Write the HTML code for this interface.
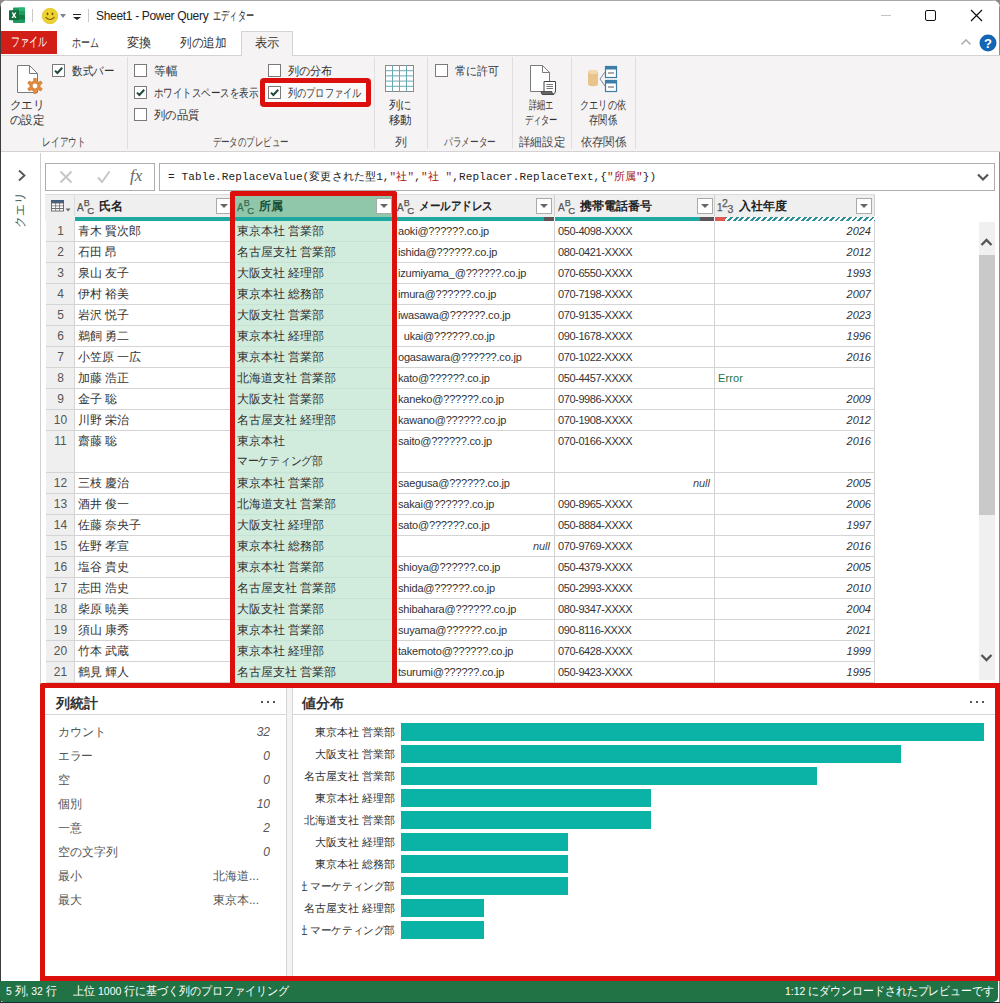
<!DOCTYPE html>
<html lang="ja"><head><meta charset="utf-8"><title>Sheet1 - Power Query</title>
<style>
*{box-sizing:border-box}
html,body{margin:0;padding:0}
body{width:1000px;height:1003px;overflow:hidden;background:#fff;font-family:"Liberation Sans",sans-serif;font-size:12px;color:#262626;position:relative}
.a{position:absolute}
#win{position:absolute;left:0;top:0;width:1000px;height:1003px;background:#fff;border-radius:8px 8px 0 0;overflow:hidden}
#bgc{position:absolute;left:0;top:0;width:1000px;height:12px;background:#8a8a8a}
#lb{position:absolute;left:0;top:4px;width:1px;height:999px;background:#3c3c3c}
/* title */
#title{position:absolute;left:96px;top:8px;font-size:12px;line-height:16px;color:#222;white-space:nowrap}
/* tabs */
#filetab{position:absolute;left:1px;top:31px;width:56px;height:23px;background:#d11e16;color:#fff;font-size:12.5px;text-align:center;line-height:23px}
.tab{position:absolute;top:31px;height:24px;line-height:24px;font-size:12.5px;color:#333;white-space:nowrap}
#acttab{position:absolute;left:241px;top:31px;width:52px;height:25px;background:#f5f3f4;border:1px solid #d4d2d3;border-bottom:none;text-align:center;line-height:23px;font-size:12.5px;color:#333}
#ribbon{position:absolute;left:1px;top:55px;width:999px;height:97px;background:#f5f3f4;border-top:1px solid #d4d2d3;border-bottom:1px solid #d4d2d3}
.sep{position:absolute;top:57px;width:1px;height:92px;background:#e0dedf}
.rl{position:absolute;font-size:12px;color:#333;white-space:nowrap;line-height:14px}
.gl{position:absolute;top:135px;font-size:12px;color:#444;white-space:nowrap;line-height:14px;text-align:center}
.cb{position:absolute;width:13px;height:13px;border:1px solid #7a7a7a;background:#fff}
.cb svg{position:absolute;left:0;top:0}
.big{position:absolute;text-align:center;font-size:12px;line-height:15px;color:#333;white-space:nowrap}
/* left pane */
#lpane{position:absolute;left:1px;top:153px;width:40px;height:827px;background:#fff;border-right:1px solid #cfcfcf}
/* formula */
.fbox{position:absolute;top:163px;height:28px;border:1px solid #adadad;background:#fff}
#ftext{position:absolute;left:168px;top:170px;font-family:"Liberation Mono",monospace;font-size:11px;color:#222;white-space:pre;line-height:14px}
/* table */
#thead{position:absolute;left:45px;top:195px;width:830px;height:22px;background:#efefef}
.th{position:absolute;top:196px;height:21px;font-weight:bold;font-size:12px;color:#222;line-height:21px;white-space:nowrap}
.dd{position:absolute;top:198px;width:16px;height:16px;border:1px solid #a9a9a9;background:#fff}
.dd:after{content:"";position:absolute;left:3px;top:5px;border:4px solid transparent;border-top:4px solid #666;border-bottom:none}
.r{position:absolute;left:0;width:1000px}
.c{position:absolute;top:0;height:100%;border-right:1px solid #d4d4d4;border-bottom:1px solid #d4d4d4;padding:0 3px;line-height:20px;font-size:12px;color:#333;white-space:nowrap;overflow:hidden;background:#fff}
.rn{background:#efefef;text-align:center;padding:0 0 0 1px;color:#555;border-left:none}
.sel{padding-left:4px;background:#d1ecdd;border-right-color:#bfe0cf;border-bottom-color:#c4e3d2}
.num{text-align:right;font-style:italic;color:#333;font-size:11px;padding-right:3px}
.nul{text-align:right;font-style:italic;color:#444;font-size:11px;padding-right:4px}
.err{color:#217346;font-size:11px;letter-spacing:0.1px}
.em{font-size:11px;color:#333;letter-spacing:-0.2px}
.ph{font-size:11px;color:#333;letter-spacing:-0.41px}
/* red */
.red{position:absolute;border:5px solid #db0f0b;border-radius:3px}
/* profile */
.ph1{position:absolute;top:694px;font-size:14px;font-weight:bold;color:#333;line-height:18px;white-space:nowrap}
.st{position:absolute;left:58px;font-size:12px;color:#555;line-height:16px;white-space:nowrap}
.sv{position:absolute;right:730px;font-size:12px;color:#555;font-style:italic;line-height:16px;white-space:nowrap;text-align:right}
.bl{position:absolute;right:605px;font-size:10.8px;color:#333;line-height:16px;white-space:nowrap;text-align:right}
.bar{position:absolute;left:401px;height:18px;background:#0ab3a5}
#status{position:absolute;left:0;top:980.5px;width:998px;height:21px;background:#217346;color:#fff;font-size:11.5px;line-height:21.5px;border-radius:0 0 5px 4px;white-space:nowrap}
#title2{position:absolute;left:213px;top:8px;font-size:13px;line-height:16px;color:#222;white-space:nowrap}
#tb{position:absolute;left:0;top:0;width:1000px;height:1px;background:#a8a8a8}
#rb{position:absolute;left:999px;top:6px;width:1px;height:997px;background:#8c8c8c}

</style></head><body>
<div id="bgc"></div>
<div id="win">
<div id="lb"></div><div id="tb"></div><div id="rb"></div>
<!-- title bar -->
<svg class="a" style="left:9px;top:7px" width="17" height="17" viewBox="0 0 17 17">
 <rect x="4" y="0.5" width="12" height="15.5" rx="1" fill="#1f9a60"/>
 <rect x="4" y="4.4" width="12" height="3.9" fill="#107c41"/>
 <rect x="4" y="8.3" width="12" height="3.9" fill="#185c37"/>
 <rect x="10" y="0.5" width="6" height="3.9" fill="#2bb673"/>
 <rect x="10" y="4.4" width="6" height="3.9" fill="#1f9a60"/>
 <rect x="10" y="8.3" width="6" height="3.9" fill="#107c41"/>
 <rect x="0" y="3.2" width="10" height="10" rx="0.8" fill="#0f6e3a"/>
 <path d="M2.6 5.4 L4.2 5.4 L5 7.1 L5.8 5.4 L7.4 5.4 L5.9 8.2 L7.5 11 L5.9 11 L5 9.3 L4.1 11 L2.5 11 L4.1 8.2 Z" fill="#fff"/>
</svg>
<div class="a" style="left:32px;top:9px;width:1px;height:13px;background:#c8c8c8"></div>
<svg class="a" style="left:41px;top:7px" width="18" height="18" viewBox="0 0 18 18">
 <circle cx="9" cy="9" r="7.7" fill="#f0d22e" stroke="#dcc02a" stroke-width="0.8"/>
 <ellipse cx="6.5" cy="6.9" rx="0.9" ry="1.4" fill="#6b5712"/>
 <ellipse cx="11.5" cy="6.9" rx="0.9" ry="1.4" fill="#6b5712"/>
 <path d="M4.8 10.3 Q9 14.6 13.2 10.3" fill="none" stroke="#6b5712" stroke-width="1.1" stroke-linecap="round"/>
</svg>
<div class="a" style="left:60px;top:14px;border:3.5px solid transparent;border-top:4px solid #7a8793;border-bottom:none"></div>
<div class="a" style="left:73px;top:13.5px;width:8px;height:1px;background:#222"></div>
<div class="a" style="left:73px;top:16.5px;border:4px solid transparent;border-top:3.5px solid #222;border-bottom:none"></div>
<div class="a" style="left:88px;top:9px;width:1px;height:13px;background:#c8c8c8"></div>
<div id="title" style="letter-spacing:-0.32px">Sheet1 - Power Query</div><div id="title2" style="transform:scaleX(0.6308);transform-origin:0 0">エディター</div>
<!-- window controls -->
<div class="a" style="left:881px;top:15px;width:10px;height:1px;background:#c4c4c4"></div>
<div class="a" style="left:925px;top:10px;width:11px;height:11px;border:1.3px solid #111;border-radius:2px"></div>
<svg class="a" style="left:970px;top:9px" width="13" height="13" viewBox="0 0 13 13"><path d="M1 1 L12 12 M12 1 L1 12" stroke="#111" stroke-width="1.2" fill="none"/></svg>
<!-- tabs -->
<div id="filetab"><span style="display:inline-block;transform:scaleX(0.6923);transform-origin:50% 0">ファイル</span></div>
<div class="tab" style="left:72px;transform:scaleX(0.6923);transform-origin:0 0">ホーム</div>
<div class="tab" style="left:127px;transform:scaleX(0.9423);transform-origin:0 0">変換</div>
<div class="tab" style="left:180px;transform:scaleX(0.8942);transform-origin:0 0">列の追加</div>
<div id="ribbon"></div>
<div id="acttab"><span style="display:inline-block;transform:scaleX(0.9423);transform-origin:50% 0">表示</span></div>
<svg class="a" style="left:960px;top:38px" width="12" height="8" viewBox="0 0 12 8"><path d="M1.5 6.5 L6 2 L10.5 6.5" stroke="#b0b0b0" stroke-width="1.6" fill="none"/></svg>
<svg class="a" style="left:979px;top:34px" width="18" height="18" viewBox="0 0 18 18"><circle cx="9" cy="9" r="8.5" fill="#1565b5"/><text x="9" y="13.6" font-family="Liberation Sans, sans-serif" font-weight="bold" font-size="13" fill="#fff" text-anchor="middle">?</text></svg>
<!-- ribbon contents -->
<!-- layout group -->
<svg class="a" style="left:16px;top:64px" width="30" height="32" viewBox="0 0 30 32">
 <path d="M1.5 1.5 H13.5 L21.5 9.5 V28.5 H1.5 Z" fill="#fff" stroke="#7a7a7a" stroke-width="1"/>
 <path d="M13.5 1.5 V9.5 H21.5" fill="none" stroke="#7a7a7a" stroke-width="1"/>
 <g transform="translate(19,22)" fill="#dd8a41">
  <circle r="5.6"/>
  <g id="teeth"><rect x="-1.8" y="-8" width="3.6" height="16" rx="0.8"/><rect x="-1.8" y="-8" width="3.6" height="16" rx="0.8" transform="rotate(60)"/><rect x="-1.8" y="-8" width="3.6" height="16" rx="0.8" transform="rotate(120)"/></g>
  <circle r="2.4" fill="#fff"/>
 </g>
</svg>
<div class="big" style="left:4px;top:98px;width:46px;transform:scaleX(0.9722);transform-origin:50% 0">クエリ<br>の設定</div>
<div class="cb" style="left:52px;top:64px"><svg width="11" height="11" viewBox="0 0 11 11"><path d="M2 5.6 L4.4 8 L9.2 2.8" stroke="#1f4a3f" stroke-width="2" fill="none"/></svg></div>
<div class="rl" style="left:72px;top:64px;transform:scaleX(0.8750);transform-origin:0 0">数式バー</div>
<div class="gl" style="left:1px;width:126px;transform:scaleX(0.7167);transform-origin:50% 0">レイアウト</div>
<div class="sep" style="left:127px"></div>
<!-- data preview group -->
<div class="cb" style="left:134px;top:64px"></div>
<div class="rl" style="left:154px;top:64px;transform:scaleX(0.9750);transform-origin:0 0">等幅</div>
<div class="cb" style="left:134px;top:86px"><svg width="11" height="11" viewBox="0 0 11 11"><path d="M2 5.6 L4.4 8 L9.2 2.8" stroke="#1f4a3f" stroke-width="2" fill="none"/></svg></div>
<div class="rl" style="left:154px;top:86px;transform:scaleX(0.7879);transform-origin:0 0">ホワイトスペースを表示</div>
<div class="cb" style="left:134px;top:108px"></div>
<div class="rl" style="left:154px;top:108px;transform:scaleX(0.9479);transform-origin:0 0">列の品質</div>
<div class="a" style="left:263px;top:81px;width:105px;height:23px;background:#fbfafa"></div>
<div class="cb" style="left:268px;top:64px"></div>
<div class="rl" style="left:288px;top:64px;transform:scaleX(0.9271);transform-origin:0 0">列の分布</div>
<div class="cb" style="left:268px;top:86px"><svg width="11" height="11" viewBox="0 0 11 11"><path d="M2 5.6 L4.4 8 L9.2 2.8" stroke="#1f4a3f" stroke-width="2" fill="none"/></svg></div>
<div class="rl" style="left:288px;top:86px;transform:scaleX(0.7625);transform-origin:0 0">列のプロファイル</div>
<div class="red" style="left:260px;top:78px;width:111px;height:29px;border-radius:4px"></div>
<div class="gl" style="left:127px;width:247px;transform:scaleX(0.7037);transform-origin:50% 0">データのプレビュー</div>
<div class="sep" style="left:374px"></div>
<!-- column group -->
<svg class="a" style="left:385px;top:65px" width="30" height="28" viewBox="0 0 30 28">
 <rect x="0.5" y="0.5" width="28" height="26" fill="#fff" stroke="#8a8a8a"/>
 <path d="M0.5 5.7 H28.5 M0.5 10.9 H28.5 M0.5 16.1 H28.5 M0.5 21.3 H28.5" stroke="#6aa7b4" stroke-width="1"/>
 <path d="M7.5 0.5 V26.5 M14.5 0.5 V26.5 M21.5 0.5 V26.5" stroke="#6aa7b4" stroke-width="1"/>
</svg>
<div class="big" style="left:376px;top:98px;width:48px;transform:scaleX(0.9583);transform-origin:50% 0">列に<br>移動</div>
<div class="gl" style="left:375px;width:52px">列</div>
<div class="sep" style="left:427px"></div>
<!-- parameter group -->
<div class="cb" style="left:435px;top:64px"></div>
<div class="rl" style="left:455px;top:64px;transform:scaleX(0.9167);transform-origin:0 0">常に許可</div>
<div class="gl" style="left:428px;width:84px;transform:scaleX(0.7222);transform-origin:50% 0">パラメーター</div>
<div class="sep" style="left:512px"></div>
<!-- advanced editor -->
<svg class="a" style="left:529px;top:64px" width="30" height="32" viewBox="0 0 30 32">
 <path d="M1.5 1.5 H13.5 L20.5 8.5 V27.5 H1.5 Z" fill="#fff" stroke="#7a7a7a" stroke-width="1"/>
 <path d="M13.5 1.5 V8.5 H20.5" fill="none" stroke="#7a7a7a" stroke-width="1"/>
 <path d="M15 17.5 H26.5 V27 Q26.5 30.5 23 30.5 H13.5 Q15 29 15 27 Z" fill="#fff" stroke="#444" stroke-width="1"/>
 <path d="M12 27.5 H23 Q23 30.5 25 30.5 H14 Q12 30.5 12 27.5 Z" fill="#666" stroke="#444" stroke-width="0.8"/>
 <path d="M17.5 20.5 H24 M17.5 22.5 H24 M17.5 24.5 H24" stroke="#666" stroke-width="0.9"/>
</svg>
<div class="big" style="left:514px;top:98px;width:54px;transform:scaleX(0.6875);transform-origin:50% 0">詳細エ<br>ディター</div>
<div class="gl" style="left:513px;width:58px;transform:scaleX(0.9688);transform-origin:50% 0">詳細設定</div>
<div class="sep" style="left:571px"></div>
<!-- dependencies -->
<svg class="a" style="left:586px;top:65px" width="32" height="30" viewBox="0 0 32 30">
 <path d="M2 7 V19 A5 2.2 0 0 0 12 19 V7 Z" fill="#e8c48a"/>
 <ellipse cx="7" cy="7" rx="5" ry="2.2" fill="#f1d9ae"/>
 <path d="M19 7 L14 14 L19 21" fill="none" stroke="#7a8a96" stroke-width="1"/>
 <rect x="19.5" y="1.5" width="11" height="11" fill="#fff" stroke="#3c7ea6" stroke-width="1.2"/>
 <rect x="19.5" y="1.5" width="11" height="3" fill="#3c7ea6"/>
 <path d="M22 8 H28" stroke="#555" stroke-width="1"/>
 <rect x="19.5" y="15.5" width="11" height="11" fill="#fff" stroke="#3c7ea6" stroke-width="1.2"/>
 <rect x="19.5" y="15.5" width="11" height="3" fill="#3c7ea6"/>
 <path d="M22 22 H28" stroke="#555" stroke-width="1"/>
</svg>
<div class="big" style="left:573px;top:98px;width:60px;transform:scaleX(0.7667);transform-origin:50% 0">クエリの依<br>存関係</div>
<div class="gl" style="left:572px;width:63px;transform:scaleX(0.9583);transform-origin:50% 0">依存関係</div>
<div class="sep" style="left:635px"></div>
<!-- left pane -->
<div id="lpane"></div>
<svg class="a" style="left:17px;top:169px" width="10" height="13" viewBox="0 0 10 13"><path d="M2 1.5 L7.5 6.5 L2 11.5" stroke="#555" stroke-width="1.8" fill="none"/></svg>
<div class="a" style="left:2px;top:202px;width:36px;height:16px;font-size:12px;color:#3f6157;line-height:16px;text-align:center;white-space:nowrap;transform:rotate(-90deg)">クエリ</div>
<!-- formula bar -->
<div class="fbox" style="left:45px;width:110px"></div>
<svg class="a" style="left:58px;top:169px" width="16" height="16" viewBox="0 0 16 16"><path d="M2.5 2.5 L13.5 13.5 M13.5 2.5 L2.5 13.5" stroke="#c6c6c6" stroke-width="2" fill="none"/></svg>
<svg class="a" style="left:96px;top:169px" width="16" height="16" viewBox="0 0 16 16"><path d="M2 8.5 L6 13 L13.5 2.5" stroke="#c6c6c6" stroke-width="2" fill="none"/></svg>
<div class="a" style="left:130px;top:166px;font-family:'Liberation Serif',serif;font-style:italic;font-size:17px;color:#666;line-height:20px">fx</div>
<div class="fbox" style="left:159px;width:836px"></div>
<div id="ftext" style="letter-spacing:0.13px">= Table.ReplaceValue(変更された型1,<span style="color:#a31515">"社"</span>,<span style="color:#a31515">"社 "</span>,Replacer.ReplaceText,{<span style="color:#a31515">"所属"</span>})</div>
<svg class="a" style="left:976px;top:172px" width="14" height="10" viewBox="0 0 14 10"><path d="M2 2.5 L7 7.5 L12 2.5" stroke="#555" stroke-width="2.2" fill="none"/></svg>
<!-- table header -->
<div id="thead"></div>
<div class="a" style="left:233px;top:195px;width:162px;height:22px;background:#90c7aa"></div>
<svg class="a" style="left:51px;top:200px" width="22" height="13" viewBox="0 0 22 13">
 <rect x="0" y="0" width="13" height="11.5" fill="#6e6e6e"/>
 <rect x="0" y="0" width="13" height="2.6" fill="#445f7c"/>
 <path d="M1 3.6 H4.3 V5.4 H1 Z M5.1 3.6 H8 V5.4 H5.1 Z M8.8 3.6 H12 V5.4 H8.8 Z M1 6.3 H4.3 V8 H1 Z M5.1 6.3 H8 V8 H5.1 Z M8.8 6.3 H12 V8 H8.8 Z M1 8.9 H4.3 V10.6 H1 Z M5.1 8.9 H8 V10.6 H5.1 Z M8.8 8.9 H12 V10.6 H8.8 Z" fill="#fff"/>
 <path d="M14.6 8.6 H19.6 L17.1 11.4 Z" fill="#666"/>
</svg>
<!-- header cols -->

<svg class="a" style="left:77px;top:197px;color:#555" width="18" height="18"><g font-family="Liberation Sans, sans-serif" fill="currentColor" stroke="currentColor" stroke-width="0.25"><text x="0" y="14" font-size="10">A</text><text x="6.8" y="8.6" font-size="9">B</text><text x="10.2" y="17" font-size="9.5">C</text></g></svg>
<div class="th" style="left:99px">氏名</div>
<div class="dd" style="left:216px"></div>
<svg class="a" style="left:237px;top:197px;color:#3a6b52" width="18" height="18"><g font-family="Liberation Sans, sans-serif" fill="currentColor" stroke="currentColor" stroke-width="0.25"><text x="0" y="14" font-size="10">A</text><text x="6.8" y="8.6" font-size="9">B</text><text x="10.2" y="17" font-size="9.5">C</text></g></svg>
<div class="th" style="left:259px;color:#1d4f36">所属</div>
<div class="dd" style="left:376px"></div>
<svg class="a" style="left:397px;top:197px;color:#555" width="18" height="18"><g font-family="Liberation Sans, sans-serif" fill="currentColor" stroke="currentColor" stroke-width="0.25"><text x="0" y="14" font-size="10">A</text><text x="6.8" y="8.6" font-size="9">B</text><text x="10.2" y="17" font-size="9.5">C</text></g></svg>
<div class="th" style="left:419px;transform:scaleX(0.8762);transform-origin:0 0">メールアドレス</div>
<div class="dd" style="left:536px"></div>
<svg class="a" style="left:558px;top:197px;color:#555" width="18" height="18"><g font-family="Liberation Sans, sans-serif" fill="currentColor" stroke="currentColor" stroke-width="0.25"><text x="0" y="14" font-size="10">A</text><text x="6.8" y="8.6" font-size="9">B</text><text x="10.2" y="17" font-size="9.5">C</text></g></svg>
<div class="th" style="left:580px">携帯電話番号</div>
<div class="dd" style="left:697px"></div>
<svg class="a" style="left:717px;top:197px" width="18" height="18"><g font-family="Liberation Sans, sans-serif" fill="#5a5a5a" stroke="#5a5a5a" stroke-width="0.25"><text x="0" y="14" font-size="10">1</text><text x="5" y="10" font-size="10.5">2</text><text x="10.6" y="16" font-size="10.5">3</text></g></svg>
<div class="th" style="left:739px">入社年度</div>
<div class="dd" style="left:856px"></div>
<!-- header separators -->
<div class="a" style="left:74px;top:195px;width:1px;height:21px;background:#dcdcdc"></div>
<div class="a" style="left:394px;top:195px;width:1px;height:21px;background:#d0d0d0"></div>
<div class="a" style="left:554px;top:195px;width:1px;height:21px;background:#d0d0d0"></div>
<div class="a" style="left:714px;top:195px;width:1px;height:21px;background:#d0d0d0"></div>
<div class="a" style="left:874px;top:195px;width:1px;height:21px;background:#d0d0d0"></div>
<div class="a" style="left:45px;top:194px;width:830px;height:1px;background:#dcdcdc"></div>
<!-- quality bars -->
<div class="a" style="left:45px;top:217px;width:30px;height:4px;background:#efefef"></div>
<div class="a" style="left:75px;top:217px;width:158px;height:4px;background:#1fa8a1"></div>
<div class="a" style="left:233px;top:217px;width:162px;height:4px;background:#1fa8a1"></div>
<div class="a" style="left:395px;top:217px;width:149px;height:4px;background:#1fa8a1"></div>
<div class="a" style="left:544px;top:217px;width:10px;height:4px;background:#5c5557"></div>
<div class="a" style="left:555px;top:217px;width:145px;height:4px;background:#1fa8a1"></div>
<div class="a" style="left:700px;top:217px;width:14px;height:4px;background:#5c5557"></div>
<div class="a" style="left:715px;top:217px;width:10px;height:4px;background:#e0584f"></div>
<div class="a" style="left:725px;top:217px;width:150px;height:4px;background:repeating-linear-gradient(135deg,#2f8f98 0,#2f8f98 2px,#fff 2px,#fff 4px)"></div>

<div id="rows">
<div class="r" style="top:221px;height:21px"><div class="c rn" style="left:46px;width:29px">1</div><div class="c" style="left:75px;width:158px">青木 賢次郎</div><div class="c sel" style="left:233px;width:162px">東京本社 営業部</div><div class="c em" style="left:395px;width:160px">aoki@??????.co.jp</div><div class="c ph" style="left:555px;width:160px">050-4098-XXXX</div><div class="c num" style="left:715px;width:160px">2024</div></div>
<div class="r" style="top:242px;height:21px"><div class="c rn" style="left:46px;width:29px">2</div><div class="c" style="left:75px;width:158px">石田 昂</div><div class="c sel" style="left:233px;width:162px">名古屋支社 営業部</div><div class="c em" style="left:395px;width:160px">ishida@??????.co.jp</div><div class="c ph" style="left:555px;width:160px">080-0421-XXXX</div><div class="c num" style="left:715px;width:160px">2012</div></div>
<div class="r" style="top:263px;height:21px"><div class="c rn" style="left:46px;width:29px">3</div><div class="c" style="left:75px;width:158px">泉山 友子</div><div class="c sel" style="left:233px;width:162px">大阪支社 経理部</div><div class="c em" style="left:395px;width:160px">izumiyama_@??????.co.jp</div><div class="c ph" style="left:555px;width:160px">070-6550-XXXX</div><div class="c num" style="left:715px;width:160px">1993</div></div>
<div class="r" style="top:284px;height:21px"><div class="c rn" style="left:46px;width:29px">4</div><div class="c" style="left:75px;width:158px">伊村 裕美</div><div class="c sel" style="left:233px;width:162px">東京本社 総務部</div><div class="c em" style="left:395px;width:160px">imura@??????.co.jp</div><div class="c ph" style="left:555px;width:160px">070-7198-XXXX</div><div class="c num" style="left:715px;width:160px">2007</div></div>
<div class="r" style="top:305px;height:21px"><div class="c rn" style="left:46px;width:29px">5</div><div class="c" style="left:75px;width:158px">岩沢 悦子</div><div class="c sel" style="left:233px;width:162px">大阪支社 営業部</div><div class="c em" style="left:395px;width:160px">iwasawa@??????.co.jp</div><div class="c ph" style="left:555px;width:160px">070-9135-XXXX</div><div class="c num" style="left:715px;width:160px">2023</div></div>
<div class="r" style="top:326px;height:21px"><div class="c rn" style="left:46px;width:29px">6</div><div class="c" style="left:75px;width:158px">鵜飼 勇二</div><div class="c sel" style="left:233px;width:162px">東京本社 経理部</div><div class="c em" style="left:395px;width:160px">&nbsp;&nbsp;ukai@??????.co.jp</div><div class="c ph" style="left:555px;width:160px">090-1678-XXXX</div><div class="c num" style="left:715px;width:160px">1996</div></div>
<div class="r" style="top:347px;height:21px"><div class="c rn" style="left:46px;width:29px">7</div><div class="c" style="left:75px;width:158px">小笠原 一広</div><div class="c sel" style="left:233px;width:162px">東京本社 営業部</div><div class="c em" style="left:395px;width:160px">ogasawara@??????.co.jp</div><div class="c ph" style="left:555px;width:160px">070-1022-XXXX</div><div class="c num" style="left:715px;width:160px">2016</div></div>
<div class="r" style="top:368px;height:21px"><div class="c rn" style="left:46px;width:29px">8</div><div class="c" style="left:75px;width:158px">加藤 浩正</div><div class="c sel" style="left:233px;width:162px">北海道支社 営業部</div><div class="c em" style="left:395px;width:160px">kato@??????.co.jp</div><div class="c ph" style="left:555px;width:160px">050-4457-XXXX</div><div class="c err" style="left:715px;width:160px">Error</div></div>
<div class="r" style="top:389px;height:21px"><div class="c rn" style="left:46px;width:29px">9</div><div class="c" style="left:75px;width:158px">金子 聡</div><div class="c sel" style="left:233px;width:162px">大阪支社 営業部</div><div class="c em" style="left:395px;width:160px">kaneko@??????.co.jp</div><div class="c ph" style="left:555px;width:160px">070-9986-XXXX</div><div class="c num" style="left:715px;width:160px">2009</div></div>
<div class="r" style="top:410px;height:21px"><div class="c rn" style="left:46px;width:29px">10</div><div class="c" style="left:75px;width:158px">川野 栄治</div><div class="c sel" style="left:233px;width:162px">名古屋支社 経理部</div><div class="c em" style="left:395px;width:160px">kawano@??????.co.jp</div><div class="c ph" style="left:555px;width:160px">070-1908-XXXX</div><div class="c num" style="left:715px;width:160px">2012</div></div>
<div class="r" style="top:431px;height:42px"><div class="c rn" style="left:46px;width:29px">11</div><div class="c" style="left:75px;width:158px">齋藤 聡</div><div class="c sel" style="left:233px;width:162px">東京本社<br><span style="display:inline-block;transform:scaleX(0.8958);transform-origin:0 0">マーケティング部</span></div><div class="c em" style="left:395px;width:160px">saito@??????.co.jp</div><div class="c ph" style="left:555px;width:160px">070-0166-XXXX</div><div class="c num" style="left:715px;width:160px">2016</div></div>
<div class="r" style="top:473px;height:21px"><div class="c rn" style="left:46px;width:29px">12</div><div class="c" style="left:75px;width:158px">三枝 慶治</div><div class="c sel" style="left:233px;width:162px">東京本社 営業部</div><div class="c em" style="left:395px;width:160px">saegusa@??????.co.jp</div><div class="c nul" style="left:555px;width:160px">null</div><div class="c num" style="left:715px;width:160px">2005</div></div>
<div class="r" style="top:494px;height:21px"><div class="c rn" style="left:46px;width:29px">13</div><div class="c" style="left:75px;width:158px">酒井 俊一</div><div class="c sel" style="left:233px;width:162px">北海道支社 営業部</div><div class="c em" style="left:395px;width:160px">sakai@??????.co.jp</div><div class="c ph" style="left:555px;width:160px">090-8965-XXXX</div><div class="c num" style="left:715px;width:160px">2006</div></div>
<div class="r" style="top:515px;height:21px"><div class="c rn" style="left:46px;width:29px">14</div><div class="c" style="left:75px;width:158px">佐藤 奈央子</div><div class="c sel" style="left:233px;width:162px">大阪支社 経理部</div><div class="c em" style="left:395px;width:160px">sato@??????.co.jp</div><div class="c ph" style="left:555px;width:160px">050-8884-XXXX</div><div class="c num" style="left:715px;width:160px">1997</div></div>
<div class="r" style="top:536px;height:21px"><div class="c rn" style="left:46px;width:29px">15</div><div class="c" style="left:75px;width:158px">佐野 孝宣</div><div class="c sel" style="left:233px;width:162px">東京本社 総務部</div><div class="c nul" style="left:395px;width:160px">null</div><div class="c ph" style="left:555px;width:160px">070-9769-XXXX</div><div class="c num" style="left:715px;width:160px">2016</div></div>
<div class="r" style="top:557px;height:21px"><div class="c rn" style="left:46px;width:29px">16</div><div class="c" style="left:75px;width:158px">塩谷 貴史</div><div class="c sel" style="left:233px;width:162px">東京本社 営業部</div><div class="c em" style="left:395px;width:160px">shioya@??????.co.jp</div><div class="c ph" style="left:555px;width:160px">050-4379-XXXX</div><div class="c num" style="left:715px;width:160px">2005</div></div>
<div class="r" style="top:578px;height:21px"><div class="c rn" style="left:46px;width:29px">17</div><div class="c" style="left:75px;width:158px">志田 浩史</div><div class="c sel" style="left:233px;width:162px">名古屋支社 営業部</div><div class="c em" style="left:395px;width:160px">shida@??????.co.jp</div><div class="c ph" style="left:555px;width:160px">050-2993-XXXX</div><div class="c num" style="left:715px;width:160px">2010</div></div>
<div class="r" style="top:599px;height:21px"><div class="c rn" style="left:46px;width:29px">18</div><div class="c" style="left:75px;width:158px">柴原 暁美</div><div class="c sel" style="left:233px;width:162px">大阪支社 営業部</div><div class="c em" style="left:395px;width:160px">shibahara@??????.co.jp</div><div class="c ph" style="left:555px;width:160px">080-9347-XXXX</div><div class="c num" style="left:715px;width:160px">2004</div></div>
<div class="r" style="top:620px;height:21px"><div class="c rn" style="left:46px;width:29px">19</div><div class="c" style="left:75px;width:158px">須山 康秀</div><div class="c sel" style="left:233px;width:162px">東京本社 営業部</div><div class="c em" style="left:395px;width:160px">suyama@??????.co.jp</div><div class="c ph" style="left:555px;width:160px">090-8116-XXXX</div><div class="c num" style="left:715px;width:160px">2021</div></div>
<div class="r" style="top:641px;height:21px"><div class="c rn" style="left:46px;width:29px">20</div><div class="c" style="left:75px;width:158px">竹本 武蔵</div><div class="c sel" style="left:233px;width:162px">東京本社 経理部</div><div class="c em" style="left:395px;width:160px">takemoto@??????.co.jp</div><div class="c ph" style="left:555px;width:160px">070-6428-XXXX</div><div class="c num" style="left:715px;width:160px">1999</div></div>
<div class="r" style="top:662px;height:21px"><div class="c rn" style="left:46px;width:29px">21</div><div class="c" style="left:75px;width:158px">鶴見 輝人</div><div class="c sel" style="left:233px;width:162px">名古屋支社 営業部</div><div class="c em" style="left:395px;width:160px">tsurumi@??????.co.jp</div><div class="c ph" style="left:555px;width:160px">050-9423-XXXX</div><div class="c num" style="left:715px;width:160px">1995</div></div>
</div>
<!-- scrollbar -->
<div class="a" style="left:979px;top:222px;width:15.5px;height:458px;background:#f0f0f0"></div>
<div class="a" style="left:979px;top:255px;width:15.5px;height:260px;background:#c9c9c9"></div>
<svg class="a" style="left:980px;top:237px" width="13" height="10" viewBox="0 0 13 10"><path d="M1.5 8 L6.5 3 L11.5 8" stroke="#555" stroke-width="2.3" fill="none"/></svg>
<svg class="a" style="left:980px;top:653px" width="13" height="10" viewBox="0 0 13 10"><path d="M1.5 2 L6.5 7 L11.5 2" stroke="#555" stroke-width="2.3" fill="none"/></svg>
<!-- profile panels -->
<div class="a" style="left:45px;top:684px;width:955px;height:296px;background:#f3f3f3"></div>
<div class="a" style="left:45px;top:687px;width:242px;height:289px;background:#fff;border-right:1px solid #d6d6d6"></div>
<div class="a" style="left:292px;top:687px;width:704px;height:289px;background:#fff;border-left:1px solid #d6d6d6"></div>
<div class="a" style="left:45px;top:714px;width:241px;height:1px;background:#d6d6d6"></div>
<div class="a" style="left:293px;top:714px;width:703px;height:1px;background:#d6d6d6"></div>
<div class="ph1" style="left:56px">列統計</div>
<div class="ph1" style="left:302px">値分布</div>
<div class="a" style="left:261px;top:701px;width:2px;height:2px;background:#555;box-shadow:6px 0 0 #555,12px 0 0 #555"></div>
<div class="a" style="left:970px;top:701px;width:2px;height:2px;background:#555;box-shadow:6px 0 0 #555,12px 0 0 #555"></div>
<div class="st" style="top:724px;transform:scaleX(1.0000);transform-origin:0 0">カウント</div><div class="sv" style="top:724px">32</div>
<div class="st" style="top:748px;transform:scaleX(0.9722);transform-origin:0 0">エラー</div><div class="sv" style="top:748px">0</div>
<div class="st" style="top:772px">空</div><div class="sv" style="top:772px">0</div>
<div class="st" style="top:796px">個別</div><div class="sv" style="top:796px">10</div>
<div class="st" style="top:820px">一意</div><div class="sv" style="top:820px">2</div>
<div class="st" style="top:844px;transform:scaleX(0.9917);transform-origin:0 0">空の文字列</div><div class="sv" style="top:844px">0</div>
<div class="st" style="top:868px">最小</div><div class="sv" style="top:868px;font-style:normal;right:741px">北海道...</div>
<div class="st" style="top:892px">最大</div><div class="sv" style="top:892px;font-style:normal;right:741px">東京本...</div>
<!-- bars -->
<div class="bl" style="top:724px">東京本社 営業部</div><div class="bar" style="top:723px;width:583px"></div>
<div class="bl" style="top:746px">大阪支社 営業部</div><div class="bar" style="top:745px;width:500px"></div>
<div class="bl" style="top:768px">名古屋支社 営業部</div><div class="bar" style="top:767px;width:416px"></div>
<div class="bl" style="top:790px">東京本社 経理部</div><div class="bar" style="top:789px;width:250px"></div>
<div class="bl" style="top:812px">北海道支社 営業部</div><div class="bar" style="top:811px;width:250px"></div>
<div class="bl" style="top:834px">大阪支社 経理部</div><div class="bar" style="top:833px;width:167px"></div>
<div class="bl" style="top:856px">東京本社 総務部</div><div class="bar" style="top:855px;width:167px"></div>
<div class="bl" style="top:878px;width:93px;height:16px;overflow:hidden"><span style="position:absolute;right:0;top:0;transform:scaleX(0.9630);transform-origin:100% 0">東京本社 マーケティング部</span></div><div class="bar" style="top:877px;width:167px"></div>
<div class="bl" style="top:900px">名古屋支社 経理部</div><div class="bar" style="top:899px;width:83px"></div>
<div class="bl" style="top:922px;width:93px;height:16px;overflow:hidden"><span style="position:absolute;right:0;top:0;transform:scaleX(0.9630);transform-origin:100% 0">東京本社 マーケティング部</span></div><div class="bar" style="top:921px;width:83px"></div>
<!-- red highlight boxes -->
<div class="red" style="left:230px;top:191px;width:167px;height:497px;border-bottom:none;border-radius:3px 3px 0 0"></div>
<div class="red" style="left:40px;top:683px;width:959.5px;height:298px;border-bottom-width:5.5px;border-radius:2px 0 0 0"></div>
<!-- status bar -->
<div id="status"><span class="a" style="left:6px;top:0;transform:scaleX(0.9023);transform-origin:0 0">5 列, 32 行</span><span class="a" style="left:72.6px;top:0;transform:scaleX(0.9170);transform-origin:0 0">上位 1000 行に基づく列のプロファイリング</span><span class="a" style="left:785px;top:0;transform:scaleX(0.9104);transform-origin:0 0">1:12 にダウンロードされたプレビューです</span></div>
<div class="a" style="left:0;top:1001.5px;width:1000px;height:2px;background:#1d2a3a"></div>
</div>

</body></html>
